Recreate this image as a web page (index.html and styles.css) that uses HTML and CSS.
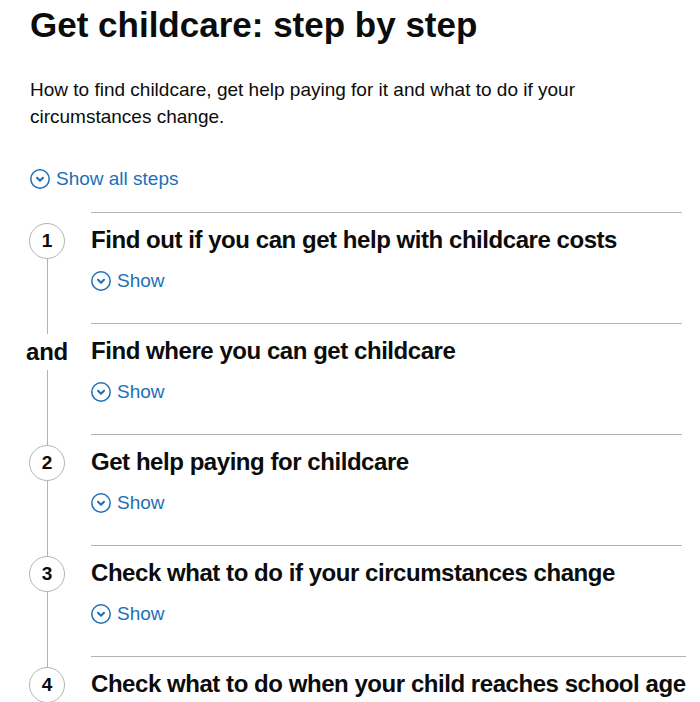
FILE: index.html
```html
<!DOCTYPE html>
<html lang="en">
<head>
<meta charset="utf-8">
<title>Get childcare: step by step</title>
<link rel="stylesheet" href="styles.css">
</head>
<body>
<main class="page">
  <h1 class="title">Get childcare: step by step</h1>
  <p class="lead">How to find childcare, get help paying for it and what to do if your circumstances change.</p>
  <button class="toggle toggle--all" type="button">
    <svg class="chev" width="20" height="20" viewBox="0 0 20 20" aria-hidden="true"><circle cx="10" cy="10" r="9.2" fill="none" stroke="currentColor" stroke-width="1.5"/><path d="M7 8.8 L10 11.8 L13 8.8" fill="none" stroke="currentColor" stroke-width="2" stroke-linecap="round" stroke-linejoin="round"/></svg>
    <span>Show all steps</span>
  </button>

  <ol class="steps">
    <li class="step step--first">
      <div class="marker"><span class="line line--top"></span><span class="num">1</span><span class="line line--bottom"></span></div>
      <div class="content">
        <h2 class="step-title">Find out if you can get help with childcare costs</h2>
        <button class="toggle" type="button"><svg class="chev" width="20" height="20" viewBox="0 0 20 20" aria-hidden="true"><circle cx="10" cy="10" r="9.2" fill="none" stroke="currentColor" stroke-width="1.5"/><path d="M7 8.8 L10 11.8 L13 8.8" fill="none" stroke="currentColor" stroke-width="2" stroke-linecap="round" stroke-linejoin="round"/></svg><span>Show</span></button>
      </div>
    </li>
    <li class="step">
      <div class="marker"><span class="line line--top"></span><span class="and">and</span><span class="line line--bottom"></span></div>
      <div class="content">
        <h2 class="step-title">Find where you can get childcare</h2>
        <button class="toggle" type="button"><svg class="chev" width="20" height="20" viewBox="0 0 20 20" aria-hidden="true"><circle cx="10" cy="10" r="9.2" fill="none" stroke="currentColor" stroke-width="1.5"/><path d="M7 8.8 L10 11.8 L13 8.8" fill="none" stroke="currentColor" stroke-width="2" stroke-linecap="round" stroke-linejoin="round"/></svg><span>Show</span></button>
      </div>
    </li>
    <li class="step">
      <div class="marker"><span class="line line--top"></span><span class="num">2</span><span class="line line--bottom"></span></div>
      <div class="content">
        <h2 class="step-title">Get help paying for childcare</h2>
        <button class="toggle" type="button"><svg class="chev" width="20" height="20" viewBox="0 0 20 20" aria-hidden="true"><circle cx="10" cy="10" r="9.2" fill="none" stroke="currentColor" stroke-width="1.5"/><path d="M7 8.8 L10 11.8 L13 8.8" fill="none" stroke="currentColor" stroke-width="2" stroke-linecap="round" stroke-linejoin="round"/></svg><span>Show</span></button>
      </div>
    </li>
    <li class="step">
      <div class="marker"><span class="line line--top"></span><span class="num">3</span><span class="line line--bottom"></span></div>
      <div class="content">
        <h2 class="step-title">Check what to do if your circumstances change</h2>
        <button class="toggle" type="button"><svg class="chev" width="20" height="20" viewBox="0 0 20 20" aria-hidden="true"><circle cx="10" cy="10" r="9.2" fill="none" stroke="currentColor" stroke-width="1.5"/><path d="M7 8.8 L10 11.8 L13 8.8" fill="none" stroke="currentColor" stroke-width="2" stroke-linecap="round" stroke-linejoin="round"/></svg><span>Show</span></button>
      </div>
    </li>
    <li class="step">
      <div class="marker"><span class="line line--top"></span><span class="num">4</span><span class="line line--bottom"></span></div>
      <div class="content">
        <h2 class="step-title">Check what to do when your child reaches school age</h2>
        <button class="toggle" type="button"><svg class="chev" width="20" height="20" viewBox="0 0 20 20" aria-hidden="true"><circle cx="10" cy="10" r="9.2" fill="none" stroke="currentColor" stroke-width="1.5"/><path d="M7 8.8 L10 11.8 L13 8.8" fill="none" stroke="currentColor" stroke-width="2" stroke-linecap="round" stroke-linejoin="round"/></svg><span>Show</span></button>
      </div>
    </li>
  </ol>
</main>
</body>
</html>
```

FILE: styles.css
```css
* { box-sizing: border-box; }

html, body {
  margin: 0;
  padding: 0;
  background: #ffffff;
}

body {
  font-family: "Liberation Sans", Arial, sans-serif;
  color: #0b0c0c;
  overflow: hidden;
}

.page {
  padding: 5px 18px 0 30px;
}

.title {
  margin: 0;
  font-size: 35px;
  line-height: 40px;
  font-weight: 700;
}

.lead {
  margin: 32px 0 0;
  font-size: 19px;
  line-height: 26.5px;
  max-width: 600px;
}

.toggle {
  display: flex;
  width: max-content;
  align-items: center;
  gap: 6px;
  padding: 0;
  border: 0;
  background: none;
  font-family: inherit;
  font-size: 19px;
  line-height: 26px;
  color: #1d70b8;
  cursor: pointer;
}

.toggle--all {
  margin-top: 36px;
  margin-bottom: 20px;
}

.chev {
  display: block;
  flex: none;
}

.steps {
  list-style: none;
  margin: 0;
  padding: 0;
}

.step {
  display: grid;
  grid-template-columns: 61px 1fr;
}

.marker {
  display: flex;
  flex-direction: column;
  align-items: center;
  width: 36px;
  margin-left: -1px;
}

.line {
  width: 1px;
  background: #b1b4b6;
}

.line--top {
  height: 11px;
  flex: none;
}

.line--bottom {
  flex: 1;
}

.step--first .line--top {
  background: transparent;
}

.num {
  flex: none;
  width: 36px;
  height: 36px;
  border: 1px solid #b1b4b6;
  border-radius: 50%;
  text-align: center;
  font-size: 19px;
  line-height: 34px;
  font-weight: 700;
}

.and {
  flex: none;
  height: 36px;
  font-size: 24px;
  line-height: 36px;
  font-weight: 700;
  letter-spacing: -0.3px;
  white-space: nowrap;
}

.content {
  border-top: 1px solid #b1b4b6;
  padding: 12px 0 29px;
}

.step-title {
  margin: 0 0 13px;
  font-size: 24px;
  line-height: 30px;
  font-weight: 700;
  letter-spacing: -0.45px;
  white-space: nowrap;
}
```
